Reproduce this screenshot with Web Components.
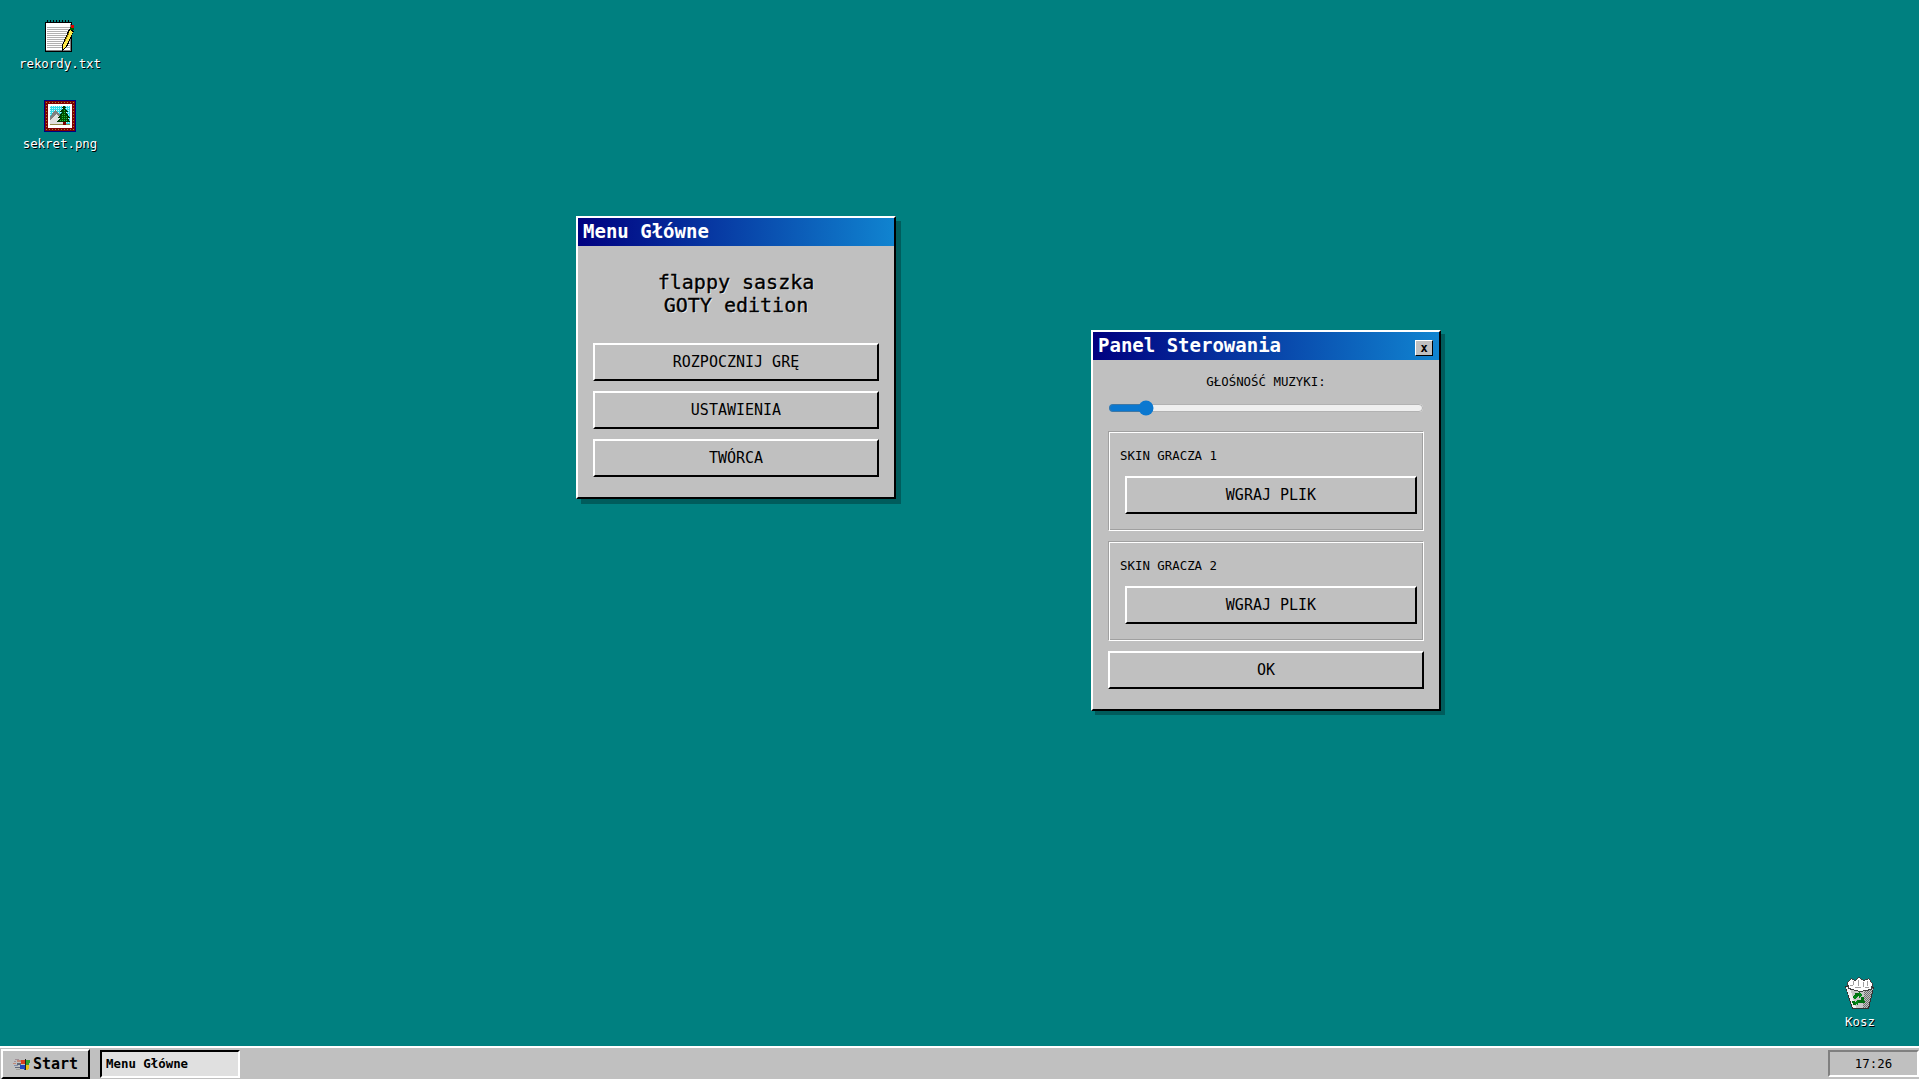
<!DOCTYPE html>
<html lang="pl">
<head>
<meta charset="utf-8">
<title>flappy saszka</title>
<style>
  html, body { margin: 0; height: 100%; overflow: hidden; }
  body { font-family: "DejaVu Sans Mono", "Liberation Mono", monospace; }
</style>
</head>
<body>
<template id="ikona-notatnik">
  <svg width="32" height="32" viewBox="0 0 32 32" shape-rendering="crispEdges">
    <rect x="1" y="2" width="27" height="30" fill="#000"/>
    <rect x="2" y="3" width="25" height="28" fill="#fff"/>
    <rect x="26" y="4" width="1" height="27" fill="#808080"/>
    <rect x="2" y="30" width="25" height="1" fill="#808080"/>
    <path d="M3 7h23v1H3zM3 9h23v1H3zM3 11h23v1H3zM3 13h23v1H3zM3 15h23v1H3zM3 17h23v1H3zM3 19h23v1H3zM3 21h23v1H3zM3 23h23v1H3zM3 25h23v1H3zM3 27h23v1H3z" fill="#b0b0b0"/>
    <path d="M3 0h1v3H3zM6 0h1v3H6zM9 0h1v3H9zM12 0h1v3h-1zM15 0h1v3h-1zM18 0h1v3h-1zM21 0h1v3h-1zM24 0h1v3h-1z" fill="#000"/>
    <polygon points="18,25 25,9 30,11 23,27 18,31" fill="#000"/>
    <polygon points="19,25 26,10 29,12 22,26 19,29" fill="#ffe94a"/>
    <path d="M24 13h1v2h-1zM23 15h1v2h-1zM22 17h1v2h-1zM21 19h1v2h-1z" fill="#a08000"/>
    <rect x="26" y="7" width="4" height="3" fill="#006000"/>
    <rect x="27" y="5" width="3" height="3" fill="#e00000"/>
  </svg>
</template>

<template id="ikona-obraz">
  <svg width="32" height="32" viewBox="0 0 32 32" shape-rendering="crispEdges">
    <defs>
      <pattern id="niebo" width="2" height="2" patternUnits="userSpaceOnUse">
        <rect width="2" height="2" fill="#30d8e8"/>
        <rect width="1" height="1" fill="#c8f8ff"/>
      </pattern>
      <pattern id="igly" width="2" height="2" patternUnits="userSpaceOnUse">
        <rect width="2" height="2" fill="#005000"/>
        <rect width="1" height="1" fill="#20c040"/>
      </pattern>
    </defs>
    <rect width="32" height="32" fill="#000080"/>
    <rect x="1" y="1" width="30" height="30" fill="#800000"/>
    <path d="M2 2h1v1H2zM5 2h1v1H5zM8 2h1v1H8zM11 2h1v1h-1zM14 2h1v1h-1zM17 2h1v1h-1zM20 2h1v1h-1zM23 2h1v1h-1zM26 2h1v1h-1zM29 2h1v1h-1zM2 29h1v1H2zM5 29h1v1H5zM8 29h1v1H8zM11 29h1v1h-1zM14 29h1v1h-1zM17 29h1v1h-1zM20 29h1v1h-1zM23 29h1v1h-1zM26 29h1v1h-1zM29 29h1v1h-1zM2 5h1v1H2zM2 8h1v1H2zM2 11h1v1H2zM2 14h1v1H2zM2 17h1v1H2zM2 20h1v1H2zM2 23h1v1H2zM2 26h1v1H2zM29 5h1v1h-1zM29 8h1v1h-1zM29 11h1v1h-1zM29 14h1v1h-1zM29 17h1v1h-1zM29 20h1v1h-1zM29 23h1v1h-1zM29 26h1v1h-1z" fill="#a08838"/>
    <rect x="4" y="4" width="24" height="24" fill="#fff"/>
    <rect x="6" y="6" width="20" height="19" fill="url(#niebo)"/>
    <polygon points="6,17 11,10 18,17 18,25 6,25" fill="#808080"/>
    <polygon points="6,25 6,20 12,14 23,25" fill="#e0e0e0"/>
    <rect x="6" y="24" width="20" height="1" fill="#908848"/>
    <polygon points="20,5 22,8 21,8 24,12 22,12 26,18 24,18 26,22 13,22 16,18 14,18 18,12 16,12 19,8 18,8" fill="#003800"/>
    <polygon points="20,8 22,12 21,12 24,18 23,18 24,21 15,21 17,18 16,18 19,12 18,12" fill="url(#igly)"/>
    <rect x="19" y="22" width="3" height="3" fill="#800000"/>
  </svg>
</template>

<template id="ikona-kosz">
  <svg width="30" height="33" viewBox="0 0 30 33" shape-rendering="crispEdges">
    <defs>
      <pattern id="cien-kosza" width="2" height="2" patternUnits="userSpaceOnUse">
        <rect width="2" height="2" fill="#c0c0c0"/>
        <rect width="1" height="1" fill="#707070"/>
        <rect x="1" y="1" width="1" height="1" fill="#707070"/>
      </pattern>
    </defs>
    <polygon points="0,9 29,10 24,32 7,32" fill="#303030"/>
    <polygon points="1,10 28,11 23,31 8,31" fill="#c8c8c8"/>
    <polygon points="1,10 5,11 11,31 8,31" fill="#f0f0f0"/>
    <polygon points="19,11 28,11 23,31 18,31" fill="url(#cien-kosza)"/>
    <polygon points="2,5 6,1 10,3 14,0 19,3 24,1 28,7 27,13 15,15 3,12" fill="#404040"/>
    <polygon points="3,5 6,2 10,4 14,1 19,4 24,2 27,7 26,12 15,14 4,11" fill="#fff"/>
    <path d="M8 4h1v4H8zM13 3h1v6h-1zM18 5h1v5h-1zM22 4h1v5h-1zM5 8h3v1H5zM10 10h6v1h-6zM20 10h4v1h-4z" fill="#a0a0a0"/>
    <g fill="none" stroke="#007010" stroke-width="3">
      <path d="M9 21l3-4h3"/>
      <path d="M17 20l1 4h-6"/>
      <path d="M8 24l1 2h2"/>
    </g>
    <path d="M14 15l4 3-4 3zM8 19h5l-3 4zM13 23v5l-4-2z" fill="#008818"/>
  </svg>
</template>

<template id="logo-start">
  <svg width="17" height="13" viewBox="0 0 20 14" shape-rendering="crispEdges">
    <path d="M1 3h3v1H1zM2 1h5v1H2z" fill="#a09098"/>
    <path d="M0 5h4v1H0zM5 2h4v2H5z" fill="#c08878"/>
    <path d="M1 7h5v2H1z" fill="#8090b0"/>
    <path d="M2 10h6v1H2zM5 5h4v2H5z" fill="#606878"/>
    <path d="M4 12h4v1H4z" fill="#a0a098"/>
    <polygon points="9,1 14,2 14,7 9,6" fill="#d84020"/>
    <polygon points="15,2 20,2 19,7 15,7" fill="#30a030"/>
    <polygon points="8,7 14,8 14,13 8,12" fill="#2048c0"/>
    <polygon points="15,8 19,8 18,13 15,13" fill="#e8c020"/>
    <path d="M14 1h1v13h-1zM8 7h11v1H8zM9 13h9v1H9z" fill="#202020"/>
  </svg>
</template>

<script>
class WinPulpit extends HTMLElement {
  constructor() {
    super();
    this.attachShadow({ mode: "open" });
  }
  connectedCallback() {
    this.shadowRoot.innerHTML = `
      <style>
        :host {
          display: flex;
          flex-direction: column;
          height: 1079px;
          background: #008080;
          position: relative;
          overflow: hidden;
        }
        .blat { flex: 1; position: relative; }
      </style>
      <div class="blat"><slot></slot></div>
      <slot name="pasek"></slot>
    `;
  }
}

class WinIkona extends HTMLElement {
  constructor() {
    super();
    this.attachShadow({ mode: "open" });
  }
  connectedCallback() {
    const ikona = document.getElementById(this.getAttribute("ikona")).content.cloneNode(true);
    this.shadowRoot.innerHTML = `
      <style>
        :host {
          position: absolute;
          display: flex;
          flex-direction: column;
          align-items: center;
          width: 100px;
          gap: 4px;
          font-size: 12.4px;
          line-height: 15px;
          color: #fff;
          text-shadow: 1px 1px 0 #000;
          white-space: nowrap;
        }
        svg { display: block; }
      </style>
      <div class="obraz"></div>
      <span><slot></slot></span>
    `;
    this.shadowRoot.querySelector(".obraz").append(ikona);
  }
}

class WinOkno extends HTMLElement {
  constructor() {
    super();
    this.attachShadow({ mode: "open" });
  }
  connectedCallback() {
    const zamknij = this.hasAttribute("zamykane") ? `<button>x</button>` : "";
    this.shadowRoot.innerHTML = `
      <style>
        :host {
          position: absolute;
          display: block;
          box-sizing: border-box;
          background: #c0c0c0;
          border: 2px solid;
          border-color: #fff #000 #000 #fff;
          box-shadow: var(--cien, 5px) var(--cien, 5px) 0 #005c5c;
        }
        .tytul {
          display: flex;
          align-items: center;
          justify-content: space-between;
          height: 28px;
          padding: 0 6px 0 5px;
          background: linear-gradient(90deg, #000080, #1084d0);
          color: #fff;
          font-size: 19px;
          font-weight: bold;
        }
        .tytul span { position: relative; top: -1px; }
        button {
          box-sizing: border-box;
          width: 18px;
          height: 16px;
          margin: 3px 0 0 0;
          padding: 0;
          background: #c0c0c0;
          border: 1px solid;
          border-color: #fff #000 #000 #fff;
          color: #000;
          font: bold 12px "DejaVu Sans Mono", monospace;
        }
        .tresc { display: flex; flex-direction: column; }
      </style>
      <div class="tytul"><span>${this.getAttribute("tytul")}</span>${zamknij}</div>
      <div class="tresc"><slot></slot></div>
    `;
  }
}

class WinPrzycisk extends HTMLElement {
  constructor() {
    super();
    this.attachShadow({ mode: "open" });
  }
  connectedCallback() {
    this.shadowRoot.innerHTML = `
      <style>
        :host {
          display: flex;
          align-items: center;
          justify-content: center;
          box-sizing: border-box;
          height: 38px;
          background: #c0c0c0;
          border: 2px solid;
          border-color: #fff #000 #000 #fff;
          color: #000;
          font-size: 15px;
          cursor: pointer;
        }
      </style>
      <slot></slot>
    `;
  }
}

class WinSkin extends HTMLElement {
  constructor() {
    super();
    this.attachShadow({ mode: "open" });
  }
  connectedCallback() {
    this.shadowRoot.innerHTML = `
      <style>
        :host {
          display: flex;
          flex-direction: column;
          box-sizing: border-box;
          height: 100px;
          padding: 16px 6px 0 16px;
          border: 1px solid;
          border-color: #a0a0a0 #fff #fff #a0a0a0;
          box-shadow: inset 1px 1px 0 #fff, inset -1px -1px 0 #a0a0a0;
          font-size: 12.4px;
          color: #000;
        }
        .etykieta { margin: 0 0 13px -5px; line-height: 15px; }
      </style>
      <div class="etykieta">${this.getAttribute("etykieta")}</div>
      <slot></slot>
    `;
  }
}

class WinPasek extends HTMLElement {
  constructor() {
    super();
    this.attachShadow({ mode: "open" });
  }
  connectedCallback() {
    this.shadowRoot.innerHTML = `
      <style>
        :host {
          display: flex;
          align-items: center;
          justify-content: space-between;
          box-sizing: border-box;
          height: 33px;
          background: #c0c0c0;
          border-top: 2px solid #fff;
          color: #000;
        }
        .lewa { display: flex; align-items: center; gap: 10px; }
        .start {
          display: flex;
          align-items: center;
          gap: 3px;
          box-sizing: border-box;
          width: 89px;
          height: 30px;
          margin: 1px 0 0 1px;
          padding-left: 10px;
          border: 2px solid;
          border-color: #fff #000 #000 #fff;
          font-size: 15px;
          font-weight: bold;
        }
        .zadanie {
          display: flex;
          align-items: center;
          box-sizing: border-box;
          width: 140px;
          height: 28px;
          padding-left: 4px;
          background: #e0e0e0;
          border: 2px solid;
          border-color: #000 #fff #fff #000;
          font-size: 12.4px;
          font-weight: bold;
        }
        .zegar {
          display: flex;
          align-items: center;
          justify-content: center;
          box-sizing: border-box;
          width: 91px;
          height: 27px;
          border: 2px solid;
          border-color: #808080 #fff #fff #808080;
          font-size: 12.4px;
        }
        svg { display: block; }
      </style>
      <div class="lewa">
        <div class="start"><span class="logo"></span><span>Start</span></div>
        <div class="zadanie">Menu Główne</div>
      </div>
      <div class="zegar">17:26</div>
    `;
    this.shadowRoot.querySelector(".logo").append(document.getElementById("logo-start").content.cloneNode(true));
  }
}

class MenuGlowne extends HTMLElement {
  constructor() {
    super();
    this.attachShadow({ mode: "open" });
  }
  connectedCallback() {
    this.shadowRoot.innerHTML = `
      <style>
        :host { display: flex; flex-direction: column; gap: 10px; padding: 25px 15px 20px; }
        h2 {
          margin: 0 0 16px;
          font-size: 20px;
          font-weight: normal;
          line-height: 23px;
          text-align: center;
          color: #000;
          text-shadow: 1px 1px 0 #e8e8e8;
          -webkit-text-stroke: 0.35px #000;
        }
      </style>
      <h2>flappy saszka<br>GOTY edition</h2>
      <slot></slot>
    `;
  }
}

class PanelSterowania extends HTMLElement {
  constructor() {
    super();
    this.attachShadow({ mode: "open" });
  }
  connectedCallback() {
    this.shadowRoot.innerHTML = `
      <style>
        :host { display: flex; flex-direction: column; gap: 10px; padding: 14px 15px 20px 15px; }
        .glosnosc { display: flex; flex-direction: column; align-items: center; font-size: 12.4px; color: #000; }
        .glosnosc label { line-height: 15px; }
        input {
          width: 316px;
          height: 16px;
          margin: 11px 0 5px;
          accent-color: #0b78d0;
        }
      </style>
      <div class="glosnosc">
        <label>GŁOŚNOŚĆ MUZYKI:</label>
        <input type="range" min="0" max="100" value="10">
      </div>
      <slot></slot>
    `;
  }
}

customElements.define("win-pulpit", WinPulpit);
customElements.define("win-ikona", WinIkona);
customElements.define("win-okno", WinOkno);
customElements.define("win-przycisk", WinPrzycisk);
customElements.define("win-skin", WinSkin);
customElements.define("win-pasek", WinPasek);
customElements.define("menu-glowne", MenuGlowne);
customElements.define("panel-sterowania", PanelSterowania);
</script>

<win-pulpit>
  <win-ikona ikona="ikona-notatnik" style="left:10px;top:20px">rekordy.txt</win-ikona>
  <win-ikona ikona="ikona-obraz" style="left:10px;top:100px">sekret.png</win-ikona>
  <win-ikona ikona="ikona-kosz" style="left:1810px;top:977px">Kosz</win-ikona>

  <win-okno tytul="Menu Główne" style="left:576px;top:216px;width:320px">
    <menu-glowne>
      <win-przycisk>ROZPOCZNIJ GRĘ</win-przycisk>
      <win-przycisk>USTAWIENIA</win-przycisk>
      <win-przycisk>TWÓRCA</win-przycisk>
    </menu-glowne>
  </win-okno>

  <win-okno tytul="Panel Sterowania" zamykane style="left:1091px;top:330px;width:350px;--cien:4px">
    <panel-sterowania>
      <win-skin etykieta="SKIN GRACZA 1"><win-przycisk>WGRAJ PLIK</win-przycisk></win-skin>
      <win-skin etykieta="SKIN GRACZA 2"><win-przycisk>WGRAJ PLIK</win-przycisk></win-skin>
      <win-przycisk>OK</win-przycisk>
    </panel-sterowania>
  </win-okno>

  <win-pasek slot="pasek"></win-pasek>
</win-pulpit>
</body>
</html>
